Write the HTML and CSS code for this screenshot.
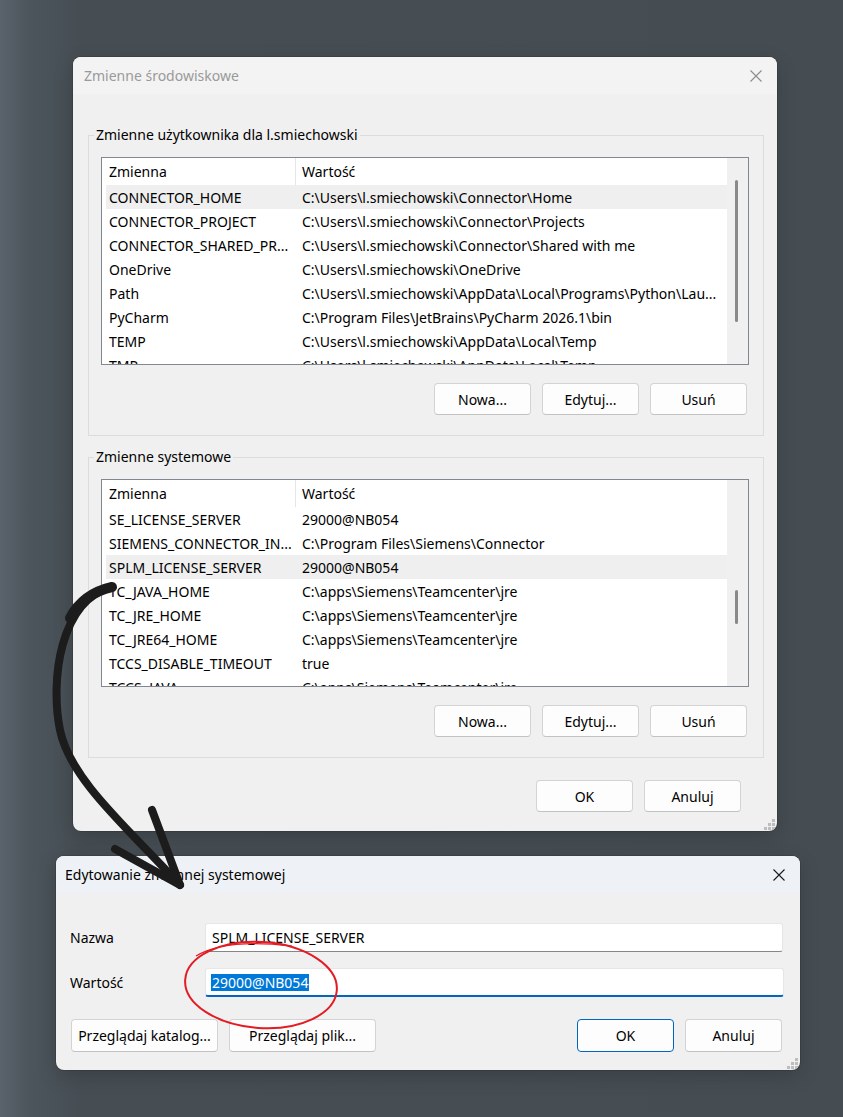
FILE: index.html
```html
<!DOCTYPE html>
<html lang="pl">
<head>
<meta charset="utf-8">
<title>Zmienne środowiskowe</title>
<link rel="stylesheet" href="styles.css">
</head>
<body>
<section class="win win-env">
  <header class="titlebar">
    <span class="title">Zmienne środowiskowe</span>
    <svg class="close" viewBox="0 0 12 12" width="12" height="12"><path d="M0.5 0.5 L11.5 11.5 M11.5 0.5 L0.5 11.5" stroke="#8c8c8c" stroke-width="1.1" fill="none"/></svg>
  </header>
  <div class="env-body">
    <fieldset class="group">
      <legend>Zmienne użytkownika dla l.smiechowski</legend>
      <div class="list">
        <div class="list-main">
          <div class="list-head"><span class="c1">Zmienna</span><span class="c2">Wartość</span></div>
          <div class="row sel"><span class="c1">CONNECTOR_HOME</span><span class="c2">C:\Users\l.smiechowski\Connector\Home</span></div>
          <div class="row"><span class="c1">CONNECTOR_PROJECT</span><span class="c2">C:\Users\l.smiechowski\Connector\Projects</span></div>
          <div class="row"><span class="c1">CONNECTOR_SHARED_PR...</span><span class="c2">C:\Users\l.smiechowski\Connector\Shared with me</span></div>
          <div class="row"><span class="c1">OneDrive</span><span class="c2">C:\Users\l.smiechowski\OneDrive</span></div>
          <div class="row"><span class="c1">Path</span><span class="c2">C:\Users\l.smiechowski\AppData\Local\Programs\Python\Lau...</span></div>
          <div class="row"><span class="c1">PyCharm</span><span class="c2">C:\Program Files\JetBrains\PyCharm 2026.1\bin</span></div>
          <div class="row"><span class="c1">TEMP</span><span class="c2">C:\Users\l.smiechowski\AppData\Local\Temp</span></div>
          <div class="row"><span class="c1">TMP</span><span class="c2">C:\Users\l.smiechowski\AppData\Local\Temp</span></div>
        </div>
        <div class="scrollbar"><div class="thumb thumb-user"></div></div>
      </div>
      <div class="btns">
        <button class="btn">Nowa...</button>
        <button class="btn">Edytuj...</button>
        <button class="btn">Usuń</button>
      </div>
    </fieldset>
    <fieldset class="group">
      <legend>Zmienne systemowe</legend>
      <div class="list">
        <div class="list-main">
          <div class="list-head"><span class="c1">Zmienna</span><span class="c2">Wartość</span></div>
          <div class="row"><span class="c1">SE_LICENSE_SERVER</span><span class="c2">29000@NB054</span></div>
          <div class="row"><span class="c1">SIEMENS_CONNECTOR_IN...</span><span class="c2">C:\Program Files\Siemens\Connector</span></div>
          <div class="row sel"><span class="c1">SPLM_LICENSE_SERVER</span><span class="c2">29000@NB054</span></div>
          <div class="row"><span class="c1">TC_JAVA_HOME</span><span class="c2">C:\apps\Siemens\Teamcenter\jre</span></div>
          <div class="row"><span class="c1">TC_JRE_HOME</span><span class="c2">C:\apps\Siemens\Teamcenter\jre</span></div>
          <div class="row"><span class="c1">TC_JRE64_HOME</span><span class="c2">C:\apps\Siemens\Teamcenter\jre</span></div>
          <div class="row"><span class="c1">TCCS_DISABLE_TIMEOUT</span><span class="c2">true</span></div>
          <div class="row"><span class="c1">TCCS_JAVA</span><span class="c2">C:\apps\Siemens\Teamcenter\jre</span></div>
        </div>
        <div class="scrollbar"><div class="thumb thumb-sys"></div></div>
      </div>
      <div class="btns">
        <button class="btn">Nowa...</button>
        <button class="btn">Edytuj...</button>
        <button class="btn">Usuń</button>
      </div>
    </fieldset>
    <div class="dialog-btns">
      <button class="btn">OK</button>
      <button class="btn">Anuluj</button>
    </div>
  </div>
  <svg class="grip" viewBox="0 0 11 11" width="11" height="11"><rect x="8" y="0" width="3" height="3"/><rect x="4" y="4" width="3" height="3"/><rect x="8" y="4" width="3" height="3"/><rect x="0" y="8" width="3" height="3"/><rect x="4" y="8" width="3" height="3"/><rect x="8" y="8" width="3" height="3"/></svg>
</section>

<section class="win win-edit">
  <header class="titlebar">
    <span class="title">Edytowanie zmiennej systemowej</span>
    <svg class="close" viewBox="0 0 12 12" width="12" height="12"><path d="M0.5 0.5 L11.5 11.5 M11.5 0.5 L0.5 11.5" stroke="#1a1a1a" stroke-width="1.1" fill="none"/></svg>
  </header>
  <div class="edit-body">
    <div class="field-row">
      <span class="field-label">Nazwa</span>
      <div class="field">SPLM_LICENSE_SERVER</div>
    </div>
    <div class="field-row">
      <span class="field-label">Wartość</span>
      <div class="field focused"><span class="selected">29000@NB054</span></div>
    </div>
    <div class="edit-btns">
      <button class="btn btn-wide">Przeglądaj katalog...</button>
      <button class="btn btn-wide">Przeglądaj plik...</button>
      <span class="spacer"></span>
      <button class="btn btn-default">OK</button>
      <button class="btn">Anuluj</button>
    </div>
  </div>
  <svg class="grip" viewBox="0 0 11 11" width="11" height="11"><rect x="8" y="0" width="3" height="3"/><rect x="4" y="4" width="3" height="3"/><rect x="8" y="4" width="3" height="3"/><rect x="0" y="8" width="3" height="3"/><rect x="4" y="8" width="3" height="3"/><rect x="8" y="8" width="3" height="3"/></svg>
</section>

<svg class="annot" viewBox="0 0 843 1117" width="843" height="1117">
  <path d="M112 587 C60 600 50 680 60 730 C70 780 130 830 180 885" fill="none" stroke="#1c1c1c" stroke-width="8" stroke-linecap="round"/>
  <path d="M112 587 C90 592 78 603 70 618" fill="none" stroke="#1c1c1c" stroke-width="10" stroke-linecap="round"/>
  <path d="M152 810 L180 885 L115 849" fill="none" stroke="#1c1c1c" stroke-width="8" stroke-linecap="round" stroke-linejoin="round"/>
  <ellipse cx="261" cy="985" rx="76" ry="43" transform="rotate(4 261 985)" fill="none" stroke="#e31b23" stroke-width="2"/>
  <path d="M196 956 Q225 938 292 946" fill="none" stroke="#e31b23" stroke-width="1.2"/>
</svg>
</body>
</html>
```
FILE: styles.css
```css
* { box-sizing: border-box; }

html, body { margin: 0; padding: 0; }

body {
  width: 843px;
  height: 1117px;
  overflow: hidden;
  position: relative;
  background: linear-gradient(90deg, #5a636b 0px, #4c555c 30px, #464e54 80px, #454d53 100%);
  font-family: "Noto Sans", "Liberation Sans", sans-serif;
  font-size: 14px;
  color: #000;
}

.win {
  position: relative;
  background: #f0f0f0;
  border-radius: 8px;
  overflow: hidden;
  box-shadow: 0 0 0 1px rgba(0, 0, 0, 0.12), 0 6px 20px rgba(0, 0, 0, 0.18);
}

.win-env {
  margin: 57px 0 0 73px;
  width: 704px;
  height: 774px;
}

.win-edit {
  margin: 25px 0 0 56px;
  width: 744px;
  height: 214px;
}

.titlebar {
  height: 37px;
  display: flex;
  align-items: center;
  justify-content: space-between;
  padding: 0 15px 0 11px;
  background: #f3f3f3;
}

.win-edit .titlebar {
  background: #eef2f6;
  padding-left: 9px;
}

.title {
  color: #9a9a9a;
  line-height: 20px;
}

.win-edit .title { color: #000; }

.close { display: block; }

.env-body {
  padding: 31px 13px 0 15px;
}

.group {
  margin: 0;
  min-width: 0;
  border: 1px solid #dcdcdc;
  padding: 12px 14px 20px 12px;
}

.group + .group { margin-top: 11px; }

.group legend {
  padding: 0 2px;
  margin-left: -7px;
  line-height: 20px;
}

.list {
  display: flex;
  height: 208px;
  border: 1px solid #828790;
  background: #fff;
}

.list-main {
  flex: 1;
  overflow: hidden;
  white-space: nowrap;
}

.list-head {
  display: flex;
  height: 27px;
}

.list-head .c1 {
  width: 194px;
  padding-left: 7px;
  border-right: 1px solid #e5e5e5;
  display: flex;
  align-items: center;
}

.list-head .c2 {
  padding-left: 6px;
  display: flex;
  align-items: center;
}

.row {
  display: flex;
  align-items: center;
  height: 24px;
  margin-left: 4px;
}

.row.sel { background: #efefef; }

.row .c1 {
  width: 190px;
  flex: none;
  padding-left: 3px;
  overflow: hidden;
}

.row .c2 { padding-left: 6px; }

.scrollbar {
  width: 21px;
  flex: none;
  background: #f0f0f0;
  padding-left: 8px;
}

.thumb {
  width: 3px;
  background: #898989;
  border-radius: 2px;
}

.thumb-user { margin-top: 22px; height: 142px; }
.thumb-sys { margin-top: 110px; height: 34px; }

.btns {
  display: flex;
  justify-content: flex-end;
  gap: 11px;
  margin-top: 18px;
  padding-right: 2px;
}

.btn {
  width: 97px;
  height: 32px;
  padding: 0;
  background: #fdfdfd;
  border: 1px solid #d3d3d3;
  border-bottom-color: #c2c2c2;
  border-radius: 4px;
  font-family: inherit;
  font-size: 14px;
  color: #000;
}

.dialog-btns {
  display: flex;
  justify-content: flex-end;
  gap: 11px;
  margin-top: 22px;
  padding-right: 23px;
}

.grip {
  position: absolute;
  right: 2px;
  bottom: 1px;
  fill: #bdbdbd;
}

.edit-body {
  padding: 30px 17px 0 15px;
}

.field-row {
  display: flex;
  align-items: center;
  height: 29px;
}

.field-row + .field-row { margin-top: 16px; }

.field-label {
  width: 135px;
  flex: none;
  margin-left: -1px;
  padding-right: 1px;
}

.field {
  flex: 1;
  height: 29px;
  display: flex;
  align-items: center;
  padding-left: 6px;
  background: #fff;
  border: 1px solid #e6e6e6;
  border-bottom: 1px solid #868686;
  border-radius: 3px;
}

.field.focused {
  border-bottom: 2px solid #0067c0;
  margin-right: -1px;
}

.selected {
  background: #0078d7;
  color: #fff;
  line-height: 17px;
  padding: 0 1px;
  margin-left: -1px;
}

.edit-btns {
  display: flex;
  gap: 11px;
  margin-top: 22px;
  padding-right: 1px;
}

.edit-btns .btn { height: 33px; }

.btn-wide { width: 147px; }

.spacer { flex: 1; }

.btn-default { border-color: #0067c0; }

.annot {
  position: absolute;
  left: 0;
  top: 0;
  pointer-events: none;
}
```
